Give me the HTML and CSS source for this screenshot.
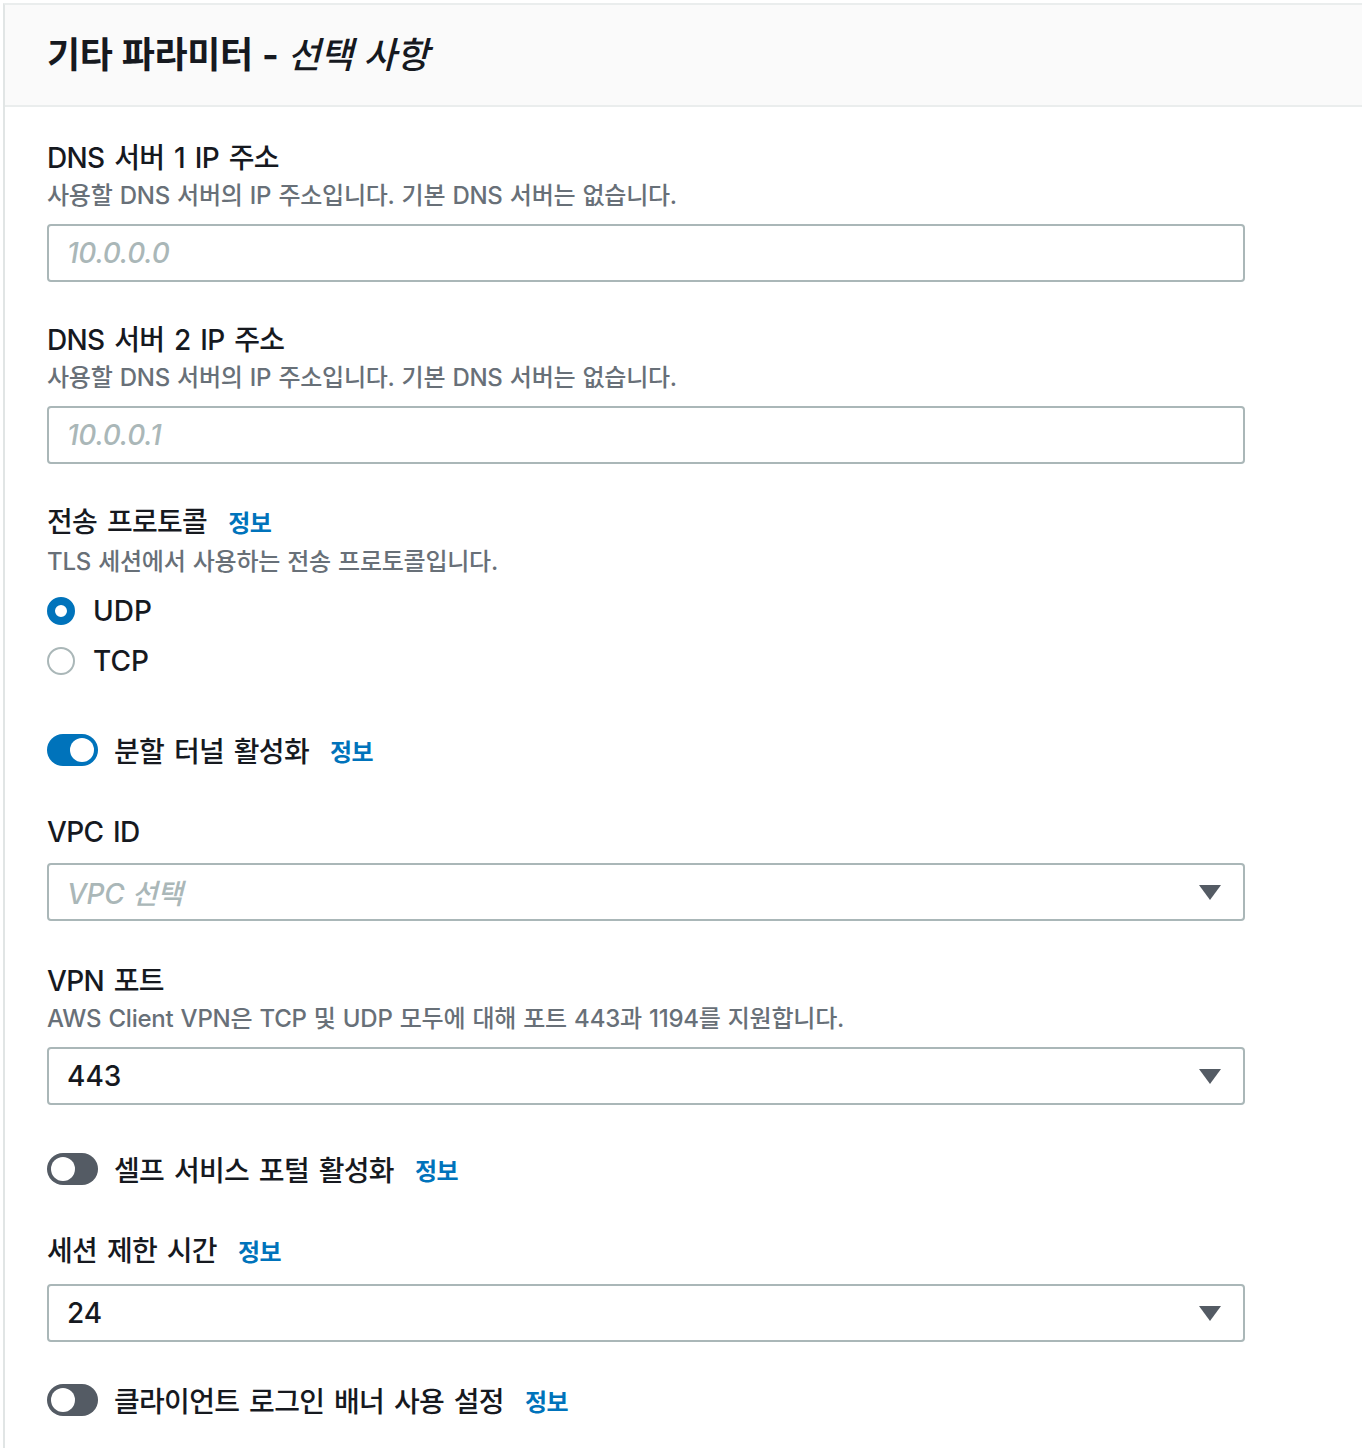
FILE: index.html
```html
<!DOCTYPE html>
<html lang="ko">
<head>
<meta charset="utf-8">
<title>기타 파라미터</title>
<link rel="stylesheet" href="styles.css">
</head>
<body>
<section class="panel">
  <header class="panel-header">
    <h2 class="title">기타 파라미터 - <i class="optional">선택 사항</i></h2>
  </header>
  <div class="panel-body">
    <div class="field">
      <div class="label">DNS 서버 1 IP 주소</div>
      <div class="desc">사용할 DNS 서버의 IP 주소입니다. 기본 DNS 서버는 없습니다.</div>
      <div class="input"><span class="placeholder">10.0.0.0</span></div>
    </div>
    <div class="field">
      <div class="label">DNS 서버 2 IP 주소</div>
      <div class="desc">사용할 DNS 서버의 IP 주소입니다. 기본 DNS 서버는 없습니다.</div>
      <div class="input"><span class="placeholder">10.0.0.1</span></div>
    </div>
    <div class="field">
      <div class="label">전송 프로토콜<a class="info">정보</a></div>
      <div class="desc">TLS 세션에서 사용하는 전송 프로토콜입니다.</div>
      <div class="radios">
        <div class="radio-row"><span class="radio checked"></span><span class="radio-label">UDP</span></div>
        <div class="radio-row"><span class="radio"></span><span class="radio-label">TCP</span></div>
      </div>
    </div>
    <div class="toggle-row">
      <span class="toggle on"><span class="knob"></span></span>
      <span class="toggle-label">분할 터널 활성화</span><a class="info">정보</a>
    </div>
    <div class="field">
      <div class="label">VPC ID</div>
      <div class="input select nodesc"><span class="placeholder">VPC 선택</span><span class="caret"></span></div>
    </div>
    <div class="field after-select">
      <div class="label">VPN 포트</div>
      <div class="desc">AWS Client VPN은 TCP 및 UDP 모두에 대해 포트 443과 1194를 지원합니다.</div>
      <div class="input select"><span class="value">443</span><span class="caret"></span></div>
    </div>
    <div class="toggle-row">
      <span class="toggle"><span class="knob"></span></span>
      <span class="toggle-label">셀프 서비스 포털 활성화</span><a class="info">정보</a>
    </div>
    <div class="field">
      <div class="label">세션 제한 시간<a class="info">정보</a></div>
      <div class="input select nodesc"><span class="value">24</span><span class="caret"></span></div>
    </div>
    <div class="toggle-row last">
      <span class="toggle"><span class="knob"></span></span>
      <span class="toggle-label">클라이언트 로그인 배너 사용 설정</span><a class="info">정보</a>
    </div>
  </div>
</section>
</body>
</html>
```

FILE: styles.css
```css
html, body {
  margin: 0;
  padding: 0;
  background: #ffffff;
}
body {
  font-family: "Inter", "Noto Sans CJK KR", sans-serif;
  color: #16191f;
  height: 1448px;
  overflow: hidden;
}
.panel {
  margin: 3px 0 0 3px;
  border-left: 2px solid #e1e5e5;
  border-top: 2px solid #eaeded;
  min-height: 1500px;
}
.panel-header {
  height: 100px;
  background: #fafafa;
  border-bottom: 2px solid #eaeded;
  display: flex;
  align-items: center;
  padding-left: 42px;
}
.title {
  margin: 0;
  font-size: 36px;
  font-weight: 700;
  line-height: 44px;
  color: #16191f;
  letter-spacing: -0.01em;
  word-spacing: 1px;
}
.optional {
  font-weight: 500;
  font-style: italic;
}
.panel-body {
  padding: 31px 0 0 42px;
  display: flex;
  flex-direction: column;
  gap: 38px;
}
.field {
  display: flex;
  flex-direction: column;
  width: 1198px;
}
.field.after-select {
  margin-top: 2px;
}
.label {
  font-size: 28px;
  line-height: 40px;
  font-weight: 500;
  letter-spacing: -0.025em;
  word-spacing: 3px;
}
.desc {
  font-size: 24px;
  line-height: 36px;
  color: #687078;
  font-weight: 500;
  letter-spacing: -0.01em;
  word-spacing: 1px;
}
.info {
  color: #0073bb;
  font-size: 24px;
  font-weight: 700;
  margin-left: 21px;
  letter-spacing: -0.02em;
  word-spacing: 0;
}
.input {
  margin-top: 10px;
  height: 54px;
  border: 2px solid #aab7b8;
  border-radius: 4px;
  display: flex;
  align-items: center;
  padding: 0 22px 0 18px;
  font-size: 28px;
  font-weight: 500;
}
.input.nodesc {
  margin-top: 11px;
}
.placeholder {
  color: #aab7b8;
  font-style: italic;
  letter-spacing: -0.01em;
}
.value {
  color: #16191f;
}
.select {
  justify-content: space-between;
}
.caret {
  width: 0;
  height: 0;
  border-left: 11px solid transparent;
  border-right: 11px solid transparent;
  border-top: 15px solid #545b64;
}
.radios {
  margin-top: 6px;
  display: flex;
  flex-direction: column;
}
.radio-row {
  height: 50px;
  display: flex;
  align-items: center;
}
.radio {
  box-sizing: border-box;
  width: 28px;
  height: 28px;
  border-radius: 50%;
  border: 2px solid #aab7b8;
  background: #fff;
}
.radio.checked {
  border: 8px solid #0073bb;
}
.radio-label {
  margin-left: 18px;
  font-size: 28px;
  font-weight: 500;
}
.toggle-row {
  height: 40px;
  margin: 6px 0 4px;
  display: flex;
  align-items: center;
}
.toggle-row.last {
  margin-top: 0;
}
.toggle {
  box-sizing: border-box;
  width: 51px;
  height: 32px;
  border-radius: 16px;
  background: #545b64;
  display: flex;
  align-items: center;
  padding: 0 4px;
}
.toggle.on {
  background: #0073bb;
  justify-content: flex-end;
}
.knob {
  width: 24px;
  height: 24px;
  border-radius: 50%;
  background: #fff;
}
.toggle-label {
  margin-left: 16px;
  font-size: 28px;
  font-weight: 500;
  letter-spacing: -0.025em;
  word-spacing: 3px;
}
```
